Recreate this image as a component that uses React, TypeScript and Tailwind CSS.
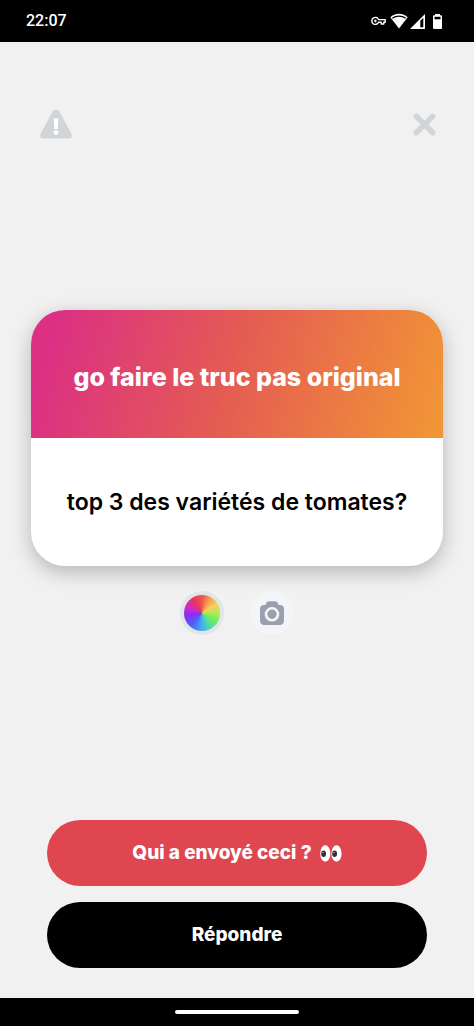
import React from 'react';

const StatusBar: React.FC = () => (
  <header className="flex h-[42px] shrink-0 items-center justify-between bg-black pr-8 pl-[26px] text-white">
    <time className="font-['Roboto',sans-serif] text-[16px] leading-5 font-medium">22:07</time>

    <div className="flex items-center gap-2">
      <div className="flex items-center gap-1">
        {/* VPN key */}
        <svg width="15" height="10" viewBox="0 0 15 10" fill="none" stroke="currentColor" strokeWidth="1.4" aria-hidden="true">
          <path d="M7.6 3.6H14.2V6.2H12.8V8H10.2V6.2H7.6A3.5 3.5 0 1 1 7.6 3.6Z" strokeLinejoin="round" />
          <circle cx="4.4" cy="4.9" r="1" fill="currentColor" strokeWidth="0.6" />
        </svg>
        <div className="flex items-center gap-0.5">
          {/* Wifi */}
          <svg width="18" height="16" viewBox="0 0 18 16" aria-hidden="true">
            <path d="M9 15.5L0.3 4.2C2.6 2 5.6.7 9 .7s6.4 1.3 8.7 3.5Z" fill="currentColor" />
            <path d="M2.3 5.2C6 2.4 12 2.4 15.7 5.2" fill="none" stroke="#000" strokeWidth="1.3" />
          </svg>
          {/* Mobile signal */}
          <svg width="15" height="15" viewBox="0 0 15 15" aria-hidden="true">
            <path d="M0 15L15 0V15Z" fill="currentColor" />
            <path d="M10.3 6.8L13.3 3.8V13.3H10.3Z" fill="#000" />
          </svg>
        </div>
      </div>
      {/* Battery */}
      <svg width="9" height="15" viewBox="0 0 9 15" aria-hidden="true">
        <path d="M2 1.3V0H7V1.3H8A1 1 0 0 1 9 2.3V14A1 1 0 0 1 8 15H1A1 1 0 0 1 0 14V2.3A1 1 0 0 1 1 1.3Z" fill="currentColor" />
        <path d="M1.5 2.8H7.5V5.3H1.500Z" fill="#000" />
      </svg>
    </div>
  </header>
);

const WarningIcon: React.FC = () => (
  <svg width="32" height="30" viewBox="0 0 32 30" aria-hidden="true">
    <path d="M12.8 2.3C14.2-.2 17.8-.2 19.2 2.3L31.3 24.4C32.7 27 31.4 29.500 28.5 29.5H3.5C.6 29.5-.7 27 .7 24.4Z" fill="#d2d5d8" />
    <path d="M13.8 9.5H18.4L17.8 20H14.4Z" fill="#fff" />
    <circle cx="16.1" cy="23.4" r="2.3" fill="#fff" />
  </svg>
);

const CloseIcon: React.FC = () => (
  <svg width="23" height="23" viewBox="0 0 23 23" fill="none" stroke="#d2d5d8" strokeWidth="5.5" strokeLinecap="round" aria-hidden="true">
    <path d="M3.3 3.3L19.7 19.7M19.7 3.3L3.3 19.7" />
  </svg>
);

const CameraIcon: React.FC = () => (
  <svg width="24" height="24" viewBox="0 0 24 24" aria-hidden="true">
    <path d="M6 2.8C6.6 1 7.6.3 9 .3H15C16.4.3 17.4 1 18 2.8L18.5 4H20C22.6 4 24 5.5 24 8V19.5C24 22.4 22.4 24 19.5 24H4.5C1.6 24 0 22.4 0 19.5V8C0 5.5 1.4 4 4 4H5.5Z" fill="#9aa1ac" />
    <circle cx="12" cy="13.3" r="6" fill="none" stroke="#f4f6f9" strokeWidth="2.6" />
  </svg>
);

const Eyes: React.FC = () => (
  <svg width="22" height="17" viewBox="0 0 22 17" role="img" aria-label="yeux">
    <ellipse cx="5.3" cy="8.5" rx="5.1" ry="8.2" fill="#fff" />
    <ellipse cx="16.5" cy="8.5" rx="5.1" ry="8.2" fill="#fff" />
    <ellipse cx="3.6" cy="8.8" rx="2.4" ry="3.3" fill="#2f3136" />
    <ellipse cx="14.6" cy="8.8" rx="2.4" ry="3.3" fill="#2f3136" />
    <circle cx="3" cy="7.5" r="0.6" fill="#fff" />
    <circle cx="14" cy="7.5" r="0.6" fill="#fff" />
  </svg>
);

const QuestionCard: React.FC = () => (
  <article className="w-full overflow-hidden rounded-[34px] bg-white text-center shadow-[0_6px_20px_rgba(0,0,0,0.25)]">
    <h1 className="flex min-h-32 items-center justify-center bg-linear-[107deg,#db3084_6%,#e45b53_48%,#f19436_97%] px-6 pt-1.5 text-[25px] leading-8 font-extrabold text-white">
      go faire le truc pas original
    </h1>
    <p className="flex min-h-32 items-center justify-center px-6 text-[23px] leading-8 font-semibold text-black">
      top 3 des variétés de tomates?
    </p>
  </article>
);

const App: React.FC = () => {
  return (
    <div className="flex min-h-screen flex-col bg-[#f1f1f1] font-['Inter',sans-serif]">
      <StatusBar />

      <main className="flex flex-1 flex-col">
        <div className="flex items-center justify-between px-9 pt-16">
          <button type="button" aria-label="Signaler" className="flex h-9 w-10 items-center justify-center">
            <WarningIcon />
          </button>
          <button type="button" aria-label="Fermer" className="flex h-9 w-7 items-center justify-center">
            <CloseIcon />
          </button>
        </div>

        <section className="flex flex-1 flex-col items-center justify-center px-[31px] pb-[18px]">
          <QuestionCard />

          <div className="mt-[25px] flex gap-[26px]">
            <button
              type="button"
              aria-label="Couleur"
              className="flex size-11 items-center justify-center rounded-full bg-[#e2e5e8]"
            >
              <span className="size-9 rounded-full bg-[conic-gradient(#ef5350,#f7a04b_30deg,#f4d35a_60deg,#b5e956_90deg,#6fec5c_120deg,#4fdcaa_150deg,#45a5f5_185deg,#4b62f5_220deg,#8a2cf5_260deg,#c72bd0_290deg,#e8345f_325deg,#ef5350)]" />
            </button>
            <button
              type="button"
              aria-label="Appareil photo"
              className="flex size-11 items-center justify-center rounded-full bg-[#f3f5f8]"
            >
              <CameraIcon />
            </button>
          </div>
        </section>

        <div className="flex flex-col gap-4 px-[47px] pb-[30px] text-[19px] leading-6 font-extrabold text-white">
          <button type="button" className="flex h-[66px] items-center justify-center gap-2 rounded-full bg-[#df4650]">
            Qui a envoyé ceci ?
            <Eyes />
          </button>
          <button type="button" className="h-[66px] rounded-full bg-black">
            Répondre
          </button>
        </div>
      </main>

      {/* Gesture bar */}
      <footer className="flex h-7 shrink-0 items-center justify-center bg-black">
        <div className="h-1 w-[124px] rounded-full bg-white" />
      </footer>
    </div>
  );
};

export default App;
